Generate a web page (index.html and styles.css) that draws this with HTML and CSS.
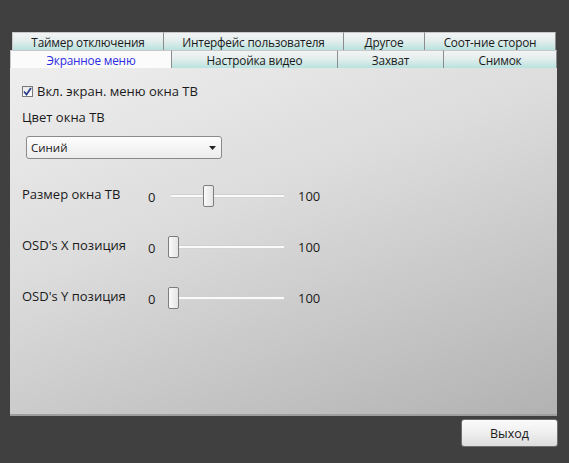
FILE: index.html
```html
<!DOCTYPE html>
<html>
<head>
<meta charset="utf-8">
<link rel="stylesheet" href="styles.css">
</head>
<body>
<div class="window">
  <div class="tabs">
    <div class="row row1">
      <div class="tab" style="width:151px">Таймер отключения</div>
      <div class="tab" style="width:180px">Интерфейс пользователя</div>
      <div class="tab" style="width:81px">Другое</div>
      <div class="tab last" style="width:132px">Соот-ние сторон</div>
    </div>
    <div class="row row2">
      <div class="tab selected" style="width:161px">Экранное меню</div>
      <div class="tab" style="width:166px">Настройка видео</div>
      <div class="tab" style="width:106px">Захват</div>
      <div class="tab last" style="width:114px">Снимок</div>
    </div>
  </div>
  <div class="panel">
    <label class="check">
      <span class="box"><svg width="9" height="9" viewBox="0 0 9 9"><path d="M1 4.5 L3.5 7.5 L8 1" fill="none" stroke="#2a3f8a" stroke-width="1.8"/></svg></span>
      <span>Вкл. экран. меню окна ТВ</span>
    </label>
    <div class="label color-label">Цвет окна ТВ</div>
    <div class="select">
      <span>Синий</span>
      <svg width="7" height="4" viewBox="0 0 7 4"><path d="M0 0 H7 L3.5 4 Z" fill="#222"/></svg>
    </div>
    <div class="slider-row first">
      <span class="slabel">Размер окна ТВ</span>
      <span class="min">0</span>
      <div class="track"><div class="thumb" style="left:32px"></div></div>
      <span class="max">100</span>
    </div>
    <div class="slider-row">
      <span class="slabel">OSD's X позиция</span>
      <span class="min">0</span>
      <div class="track"><div class="thumb" style="left:-3px"></div></div>
      <span class="max">100</span>
    </div>
    <div class="slider-row">
      <span class="slabel">OSD's Y позиция</span>
      <span class="min">0</span>
      <div class="track"><div class="thumb" style="left:-3px"></div></div>
      <span class="max">100</span>
    </div>
  </div>
  <div class="footer">
    <button class="btn">Выход</button>
  </div>
</div>
</body>
</html>
```
FILE: styles.css
```css
html, body {
  margin: 0;
  padding: 0;
  background: #404040;
  width: 569px;
  height: 463px;
  overflow: hidden;
  font-family: "Open Sans", "Noto Sans", sans-serif;
  font-size: 12px;
  color: #1a1a1a;
}
.window {
  padding: 32px 12px 0 10px;
  display: flex;
  flex-direction: column;
}
.tabs {
  display: flex;
  flex-direction: column;
}
.row {
  display: flex;
  height: 18px;
}
.row1 {
  padding-left: 2px;
}
.tab {
  box-sizing: border-box;
  height: 18px;
  display: flex;
  align-items: center;
  justify-content: center;
  background: linear-gradient(#f2f4f4 0%, #e4eeed 45%, #b9e2de 100%);
  border-left: 1px solid #8c8c8c;
  border-top: 1px solid #c8c8c8;
  line-height: 16px;
  white-space: nowrap;
  font-size: 11.8px;
  letter-spacing: -0.2px;
}
.row1 .tab:first-child { border-left: 1px solid #c8c8c8; }
.tab.last { border-right: 1px solid #8c8c8c; }
.tab.selected {
  background: #fbfbfb;
  color: #2c2ce0;
  border-left: 1px solid #c8c8c8;
  height: 18px;
}
.panel {
  box-sizing: border-box;
  width: 547px;
  height: 348px;
  background: linear-gradient(160deg, #eeeeee 0%, #dcdcdc 40%, #b2b2b2 100%);
  border-bottom: 2px solid #9e9e9e;
  padding: 15px 12px 0 12px;
  display: flex;
  flex-direction: column;
}
.check {
  display: flex;
  align-items: center;
  gap: 4px;
  font-size: 13px;
  height: 16px;
}
.box {
  box-sizing: border-box;
  width: 11px;
  height: 11px;
  border: 1px solid #7a7a7a;
  background: linear-gradient(#e8e8e8, #ffffff);
  display: flex;
  align-items: center;
  justify-content: center;
}
.label { font-size: 13px; }
.color-label {
  margin-top: 9px;
}
.select {
  box-sizing: border-box;
  margin-top: 10px;
  margin-left: 4px;
  width: 196px;
  height: 23px;
  border: 1px solid #8a8a8a;
  border-radius: 3px;
  background: linear-gradient(#fdfdfd, #ececec);
  display: flex;
  align-items: center;
  justify-content: space-between;
  padding: 0 5px 0 4px;
  font-size: 11.5px;
}
.slider-row {
  display: flex;
  align-items: center;
  height: 22px;
  margin-top: 29px;
}
.slider-row.first {
  margin-top: 26px;
}
.slabel {
  width: 126px;
  font-size: 13px;
  position: relative;
  top: -2px;
}
.min {
  width: 23px;
  font-size: 13px;
  position: relative;
  top: 1px;
}
.track {
  position: relative;
  box-sizing: border-box;
  width: 113px;
  height: 4px;
  background: #fafafa;
  border-top: 1px solid #d0d0d0;
  border-bottom: 1px solid #d4d4d4;
}
.thumb {
  position: absolute;
  top: -10px;
  box-sizing: border-box;
  width: 11px;
  height: 22px;
  border: 1px solid #7d7d7d;
  border-radius: 2px;
  background: linear-gradient(90deg, #fafafa, #e4e4e4);
}
.max {
  margin-left: 14px;
  font-size: 13px;
}
.footer {
  display: flex;
  justify-content: flex-end;
  padding-top: 3px;
  width: 547px;
}
.btn {
  box-sizing: border-box;
  width: 97px;
  height: 28px;
  border: 1px solid #6e6e6e;
  border-radius: 3px;
  background: linear-gradient(#fbfbfb 0%, #efefef 50%, #dcdcdc 100%);
  font-family: "Open Sans", "Noto Sans", sans-serif;
  font-size: 12.5px;
  color: #1a1a1a;
  margin-right: -1px;
}
```
